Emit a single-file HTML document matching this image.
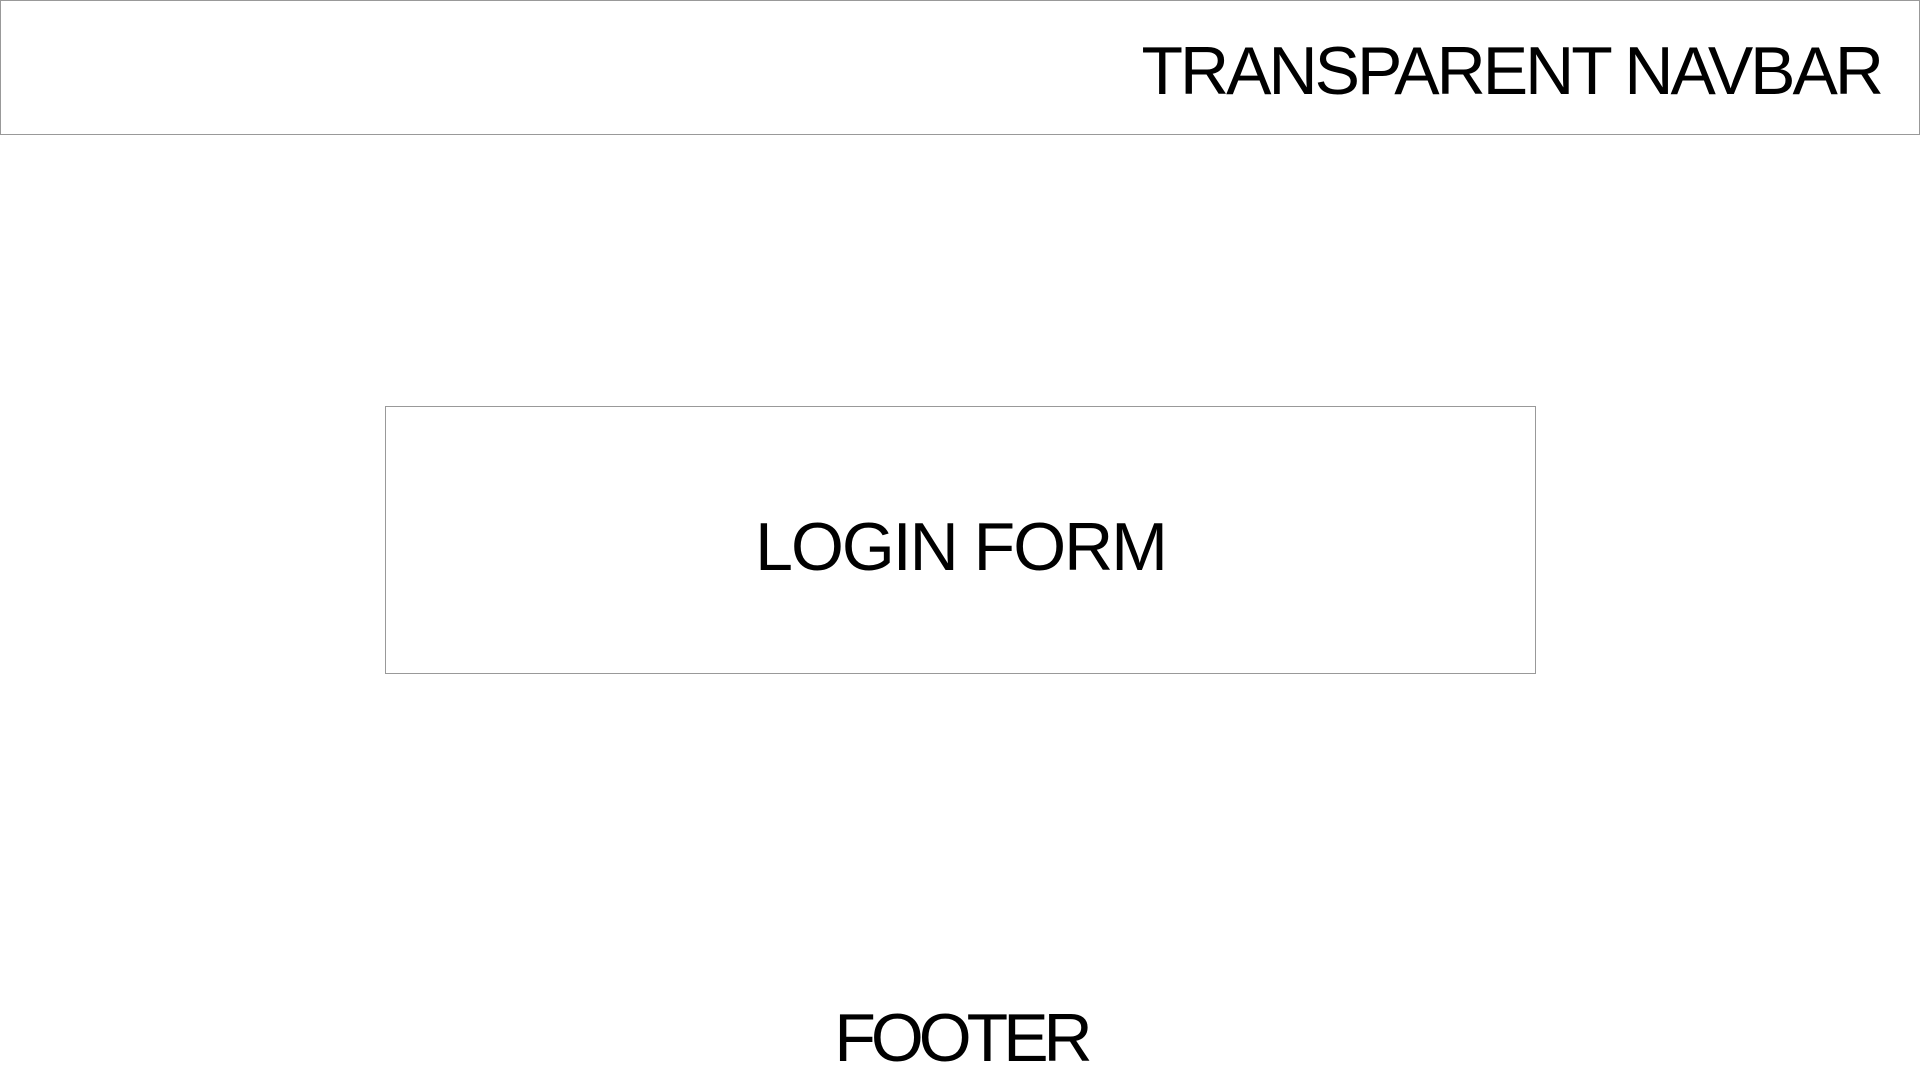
<!DOCTYPE html>
<html><head><meta charset="utf-8"><style>
html,body{margin:0;padding:0;width:1920px;height:1080px;background:#fff;overflow:hidden;font-family:"Liberation Sans",sans-serif;color:#000}
.nav{position:absolute;left:0;top:0;width:1918px;height:133px;border:1px solid #999;}
.nav span{position:absolute;right:38px;top:30px;font-size:68px;line-height:80px;letter-spacing:-3px}
.box{position:absolute;left:385px;top:406px;width:1149px;height:266px;border:1px solid #999;}
.box span{position:absolute;left:0;right:0;text-align:center;top:100px;font-size:68px;line-height:80px;letter-spacing:-2px}
.foot{position:absolute;left:0;width:1922px;text-align:center;top:998px;font-size:68px;line-height:80px;letter-spacing:-5px}
</style></head><body>
<div class="nav"><span>TRANSPARENT NAVBAR</span></div>
<div class="box"><span>LOGIN FORM</span></div>
<div class="foot">FOOTER</div>
</body></html>
